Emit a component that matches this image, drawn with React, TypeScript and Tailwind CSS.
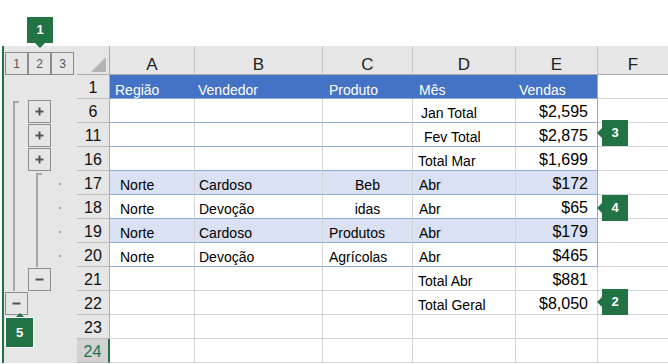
import React from "react";

const GREEN = "#217346";

type Cell = { t?: string; c?: string; money?: boolean };
type Row = { n: string; kind: "head" | "data" | "empty"; hi?: boolean; cells: Cell[] };

const rows: Row[] = [
  {
    n: "1",
    kind: "head",
    cells: [
      { t: "Região", c: "pl-[5px] text-[12px]" },
      { t: "Vendedor", c: "pl-[3px]" },
      { t: "Produto", c: "pl-[6px]" },
      { t: "Mês", c: "pl-[6px]" },
      { t: "Vendas", c: "pl-[3px]" },
    ],
  },
  { n: "6", kind: "data", cells: [{}, {}, {}, { t: "Jan Total", c: "pl-[8px]" }, { t: "$2,595", money: true }] },
  { n: "11", kind: "data", cells: [{}, {}, {}, { t: "Fev Total", c: "pl-[11px]" }, { t: "$2,875", money: true }] },
  { n: "16", kind: "data", cells: [{}, {}, {}, { t: "Total Mar", c: "pl-[5px]" }, { t: "$1,699", money: true }] },
  {
    n: "17",
    kind: "data",
    hi: true,
    cells: [
      { t: "Norte", c: "pl-[10px]" },
      { t: "Cardoso", c: "pl-[4px]" },
      { t: "Beb", c: "justify-center" },
      { t: "Abr", c: "pl-[6px] text-[13px]" },
      { t: "$172", money: true },
    ],
  },
  {
    n: "18",
    kind: "data",
    cells: [
      { t: "Norte", c: "pl-[10px]" },
      { t: "Devoção", c: "pl-[4px]" },
      { t: "idas", c: "justify-center" },
      { t: "Abr", c: "pl-[6px] text-[13px]" },
      { t: "$65", money: true },
    ],
  },
  {
    n: "19",
    kind: "data",
    hi: true,
    cells: [
      { t: "Norte", c: "pl-[10px]" },
      { t: "Cardoso", c: "pl-[4px]" },
      { t: "Produtos", c: "pl-[6px]" },
      { t: "Abr", c: "pl-[6px] text-[13px]" },
      { t: "$179", money: true },
    ],
  },
  {
    n: "20",
    kind: "data",
    cells: [
      { t: "Norte", c: "pl-[10px]" },
      { t: "Devoção", c: "pl-[4px]" },
      { t: "Agrícolas", c: "pl-[6px]" },
      { t: "Abr", c: "pl-[6px] text-[13px]" },
      { t: "$465", money: true },
    ],
  },
  { n: "21", kind: "empty", cells: [{}, {}, {}, { t: "Total Abr", c: "pl-[5px]" }, { t: "$881", money: true }] },
  { n: "22", kind: "empty", cells: [{}, {}, {}, { t: "Total Geral", c: "pl-[5px]" }, { t: "$8,050", money: true }] },
  { n: "23", kind: "empty", cells: [{}, {}, {}, {}, {}] },
  { n: "24", kind: "empty", cells: [{}, {}, {}, {}, {}] },
];

function OutlineBtn({ children, className = "" }: { children: React.ReactNode; className?: string }) {
  return (
    <div
      className={`w-[23px] h-[23px] border border-[#8c8c8c] flex items-center justify-center text-[#555] ${className}`}
    >
      {children}
    </div>
  );
}

function Plus() {
  return (
    <svg width="11" height="11" viewBox="0 0 11 11">
      <path d="M5.5 1.5v8M1.5 5.5h8" stroke="#555" strokeWidth="2" />
    </svg>
  );
}

function Minus() {
  return (
    <svg width="11" height="11" viewBox="0 0 11 11">
      <path d="M1.5 5.5h8" stroke="#555" strokeWidth="2" />
    </svg>
  );
}

function Gutter() {
  return (
    <div className="ml-[2px] w-[75px] border-l-2 border-[#217346] bg-[#e6e6e6] pl-[1px] grid grid-cols-[23px_23px_23px] grid-rows-[29px_repeat(12,24px)] text-[12px]">
      {/* level buttons */}
      <div className="col-start-1 row-start-1 pt-[6px]">
        <OutlineBtn>1</OutlineBtn>
      </div>
      <div className="col-start-2 row-start-1 pt-[6px]">
        <OutlineBtn>2</OutlineBtn>
      </div>
      <div className="col-start-3 row-start-1 pt-[6px]">
        <OutlineBtn>3</OutlineBtn>
      </div>

      {/* level 1 bracket */}
      <div className="col-start-1 row-start-3 row-end-11 ml-[8px] mt-[2px] w-[6px] border-l-2 border-t-2 border-[#a6a6a6]" />
      <div className="col-start-1 row-start-11 pt-[1px]">
        <OutlineBtn>
          <Minus />
        </OutlineBtn>
      </div>

      {/* collapsed groups */}
      <div className="col-start-2 row-start-3 pt-[1px]">
        <OutlineBtn>
          <Plus />
        </OutlineBtn>
      </div>
      <div className="col-start-2 row-start-4 pt-[1px]">
        <OutlineBtn>
          <Plus />
        </OutlineBtn>
      </div>
      <div className="col-start-2 row-start-5 pt-[1px]">
        <OutlineBtn>
          <Plus />
        </OutlineBtn>
      </div>

      {/* level 2 bracket */}
      <div className="col-start-2 row-start-6 row-end-10 ml-[8px] mt-[2px] w-[6px] border-l-2 border-t-2 border-[#a6a6a6]" />
      <div className="col-start-2 row-start-10 pt-[1px]">
        <OutlineBtn>
          <Minus />
        </OutlineBtn>
      </div>

      {/* detail dots */}
      {[6, 7, 8, 9].map((r) => (
        <div
          key={r}
          className={`col-start-3 pl-[8px] pt-[12px] ${
            r === 6 ? "row-start-6" : r === 7 ? "row-start-7" : r === 8 ? "row-start-8" : "row-start-9"
          }`}
        >
          <div className="w-[2px] h-[2px] bg-[#a0a0a0]" />
        </div>
      ))}
    </div>
  );
}

function Sheet() {
  const letters = ["A", "B", "C", "D", "E", "F"];
  return (
    <div className="grid grid-cols-[33px_85px_128px_90px_103px_82px_70px] grid-rows-[29px_repeat(12,24px)]">
      {/* corner */}
      <div className="bg-[#e6e6e6] border-b border-r border-[#ababab] flex items-end justify-end pr-[3px] pb-[2px]">
        <svg width="15" height="15" viewBox="0 0 15 15">
          <polygon points="15,0 15,15 0,15" fill="#b4b4b4" />
        </svg>
      </div>
      {letters.map((l, i) => (
        <div
          key={l}
          className={`bg-[#e6e6e6] border-b border-[#ababab] flex items-end justify-center text-[17px] leading-[18px] text-[#222] ${
            i < 5 ? "border-r border-r-[#c6c6c6]" : ""
          }`}
        >
          {l}
        </div>
      ))}

      {rows.map((row) => {
        const sel = row.n === "24";
        return (
          <React.Fragment key={row.n}>
            <div
              className={`border-b border-[#bdbdbd] flex items-end justify-center pb-[1px] text-[16px] leading-[18px] ${
                sel
                  ? "bg-[#d2d2d2] text-[#217346] border-r-2 border-r-[#217346]"
                  : "bg-[#e6e6e6] text-[#111] border-r border-r-[#ababab]"
              }`}
            >
              {row.n}
            </div>
            {row.cells.map((cell, i) => {
              const last = i === 4;
              let cls = "";
              if (row.kind === "head") {
                cls = `bg-[#4472c4] text-white border-b border-b-[#8ea9db] border-r ${
                  last ? "border-r-[#8ea9db]" : "border-r-[#4472c4]"
                } pb-0`;
              } else if (row.kind === "data") {
                cls = `${row.hi ? "bg-[#d9e1f2]" : "bg-white"} border-b border-b-[#8ea9db] border-r ${
                  last ? "border-r-[#8ea9db]" : "border-r-[#d4d4d4]"
                } pb-[1px]`;
              } else {
                cls = "bg-white border-b border-b-[#d4d4d4] border-r border-r-[#d4d4d4] pb-[1px]";
              }
              return (
                <div
                  key={i}
                  className={`flex items-end overflow-visible whitespace-nowrap ${cls} ${
                    cell.money ? "justify-end pr-[9px] text-[16px] leading-[18px]" : "text-[14px] leading-[16px]"
                  } ${cell.c ?? ""}`}
                >
                  {cell.t}
                </div>
              );
            })}
            <div className="bg-white border-b border-[#d4d4d4]" />
          </React.Fragment>
        );
      })}
    </div>
  );
}

function Callout({ n, className = "" }: { n: string; className?: string }) {
  return (
    <div
      className={`w-[26px] h-[26px] bg-[#217346] text-white font-bold text-[13px] flex items-center justify-center ${className}`}
    >
      {n}
    </div>
  );
}

function LeftCallout({ n, top }: { n: string; top: string }) {
  return (
    <div className={`absolute left-[597px] flex items-center ${top}`}>
      <svg width="5" height="10" viewBox="0 0 5 10">
        <polygon points="5,0 5,10 0,5" fill={GREEN} />
      </svg>
      <Callout n={n} />
    </div>
  );
}

export default function App() {
  return (
    <div
      className="relative w-[668px] h-[364px] overflow-hidden bg-white text-black"
      style={{ fontFamily: '"Liberation Sans", Arial, sans-serif' }}
    >
      <div className="h-[46px]" />
      <div className="flex">
        <Gutter />
        <Sheet />
      </div>

      {/* callout 1 */}
      <div className="absolute left-[27px] top-[17px] flex flex-col items-center">
        <Callout n="1" />
        <svg width="10" height="5" viewBox="0 0 10 5">
          <polygon points="0,0 10,0 5,5" fill={GREEN} />
        </svg>
      </div>

      <LeftCallout n="3" top="top-[120px]" />
      <LeftCallout n="4" top="top-[195px]" />
      <LeftCallout n="2" top="top-[289px]" />

      {/* callout 5 */}
      <div className="absolute left-[6px] top-[313px] flex flex-col items-center">
        <svg width="10" height="5" viewBox="0 0 10 5">
          <polygon points="0,5 10,5 5,0" fill={GREEN} />
        </svg>
        <Callout n="5" className="w-[27px] h-[29px] outline outline-1 outline-white" />
      </div>
    </div>
  );
}
